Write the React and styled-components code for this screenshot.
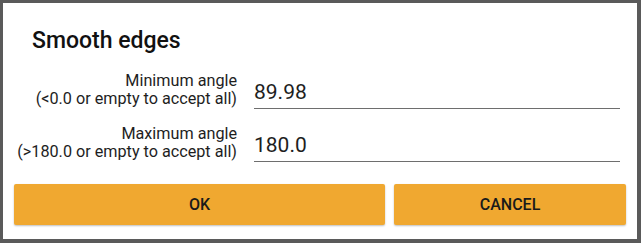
import React from 'react';
import styled, { createGlobalStyle } from 'styled-components';

const GlobalStyle = createGlobalStyle`
  html, body {
    margin: 0;
    padding: 0;
    background: #5a5a5a;
  }
  * { box-sizing: border-box; }
`;

const Screen = styled.div`
  width: 641px;
  height: 243px;
  padding: 3px 4px 4px 3px;
  background: #5a5a5a;
`;

const Dialog = styled.div`
  width: 634px;
  height: 236px;
  background: #ffffff;
  display: flex;
  flex-direction: column;
  font-family: Roboto, "Liberation Sans", sans-serif;
  color: #1a1a1a;
`;

const Title = styled.h2`
  margin: 0;
  padding: 25px 0 0 29px;
  font-size: 23px;
  line-height: 26px;
  font-weight: 500;
  color: #111;
`;

const Form = styled.div`
  display: flex;
  flex-direction: column;
  gap: 15px;
  margin-top: 17px;
`;

const Row = styled.div`
  display: grid;
  grid-template-columns: 234px 366px;
  column-gap: 17px;
  align-items: center;
`;

const Label = styled.label`
  text-align: right;
  font-size: 16.2px;
  line-height: 18px;
  color: #1e1e1e;
`;

const Input = styled.input`
  width: 100%;
  height: 38px;
  border: none;
  border-bottom: 1.5px solid #6e6e6e;
  outline: none;
  padding: 8.5px 0 4px 0;
  font-family: Roboto, "Liberation Sans", sans-serif;
  font-size: 21px;
  line-height: 24px;
  color: #1e1e1e;
  background: transparent;
`;

const Buttons = styled.div`
  display: flex;
  gap: 9px;
  padding: 0 11px;
  margin-top: 22px;
`;

const Button = styled.button`
  flex: 0 0 ${p => p.$w}px;
  height: 41px;
  border: none;
  border-radius: 2px;
  background: #f0a830;
  box-shadow: 0 1px 2px rgba(0, 0, 0, 0.25);
  font-family: Roboto, "Liberation Sans", sans-serif;
  font-size: 16px;
  font-weight: 500;
  color: #1a1a1a;
  cursor: pointer;
`;

export default function App() {
  return (
    <>
      <GlobalStyle />
      <Screen>
        <Dialog>
          <Title>Smooth edges</Title>
          <Form>
            <Row>
              <Label>Minimum angle<br />(&lt;0.0 or empty to accept all)</Label>
              <Input defaultValue="89.98" />
            </Row>
            <Row>
              <Label>Maximum angle<br />(&gt;180.0 or empty to accept all)</Label>
              <Input defaultValue="180.0" />
            </Row>
          </Form>
          <Buttons>
            <Button $w={371}>OK</Button>
            <Button $w={232}>CANCEL</Button>
          </Buttons>
        </Dialog>
      </Screen>
    </>
  );
}
